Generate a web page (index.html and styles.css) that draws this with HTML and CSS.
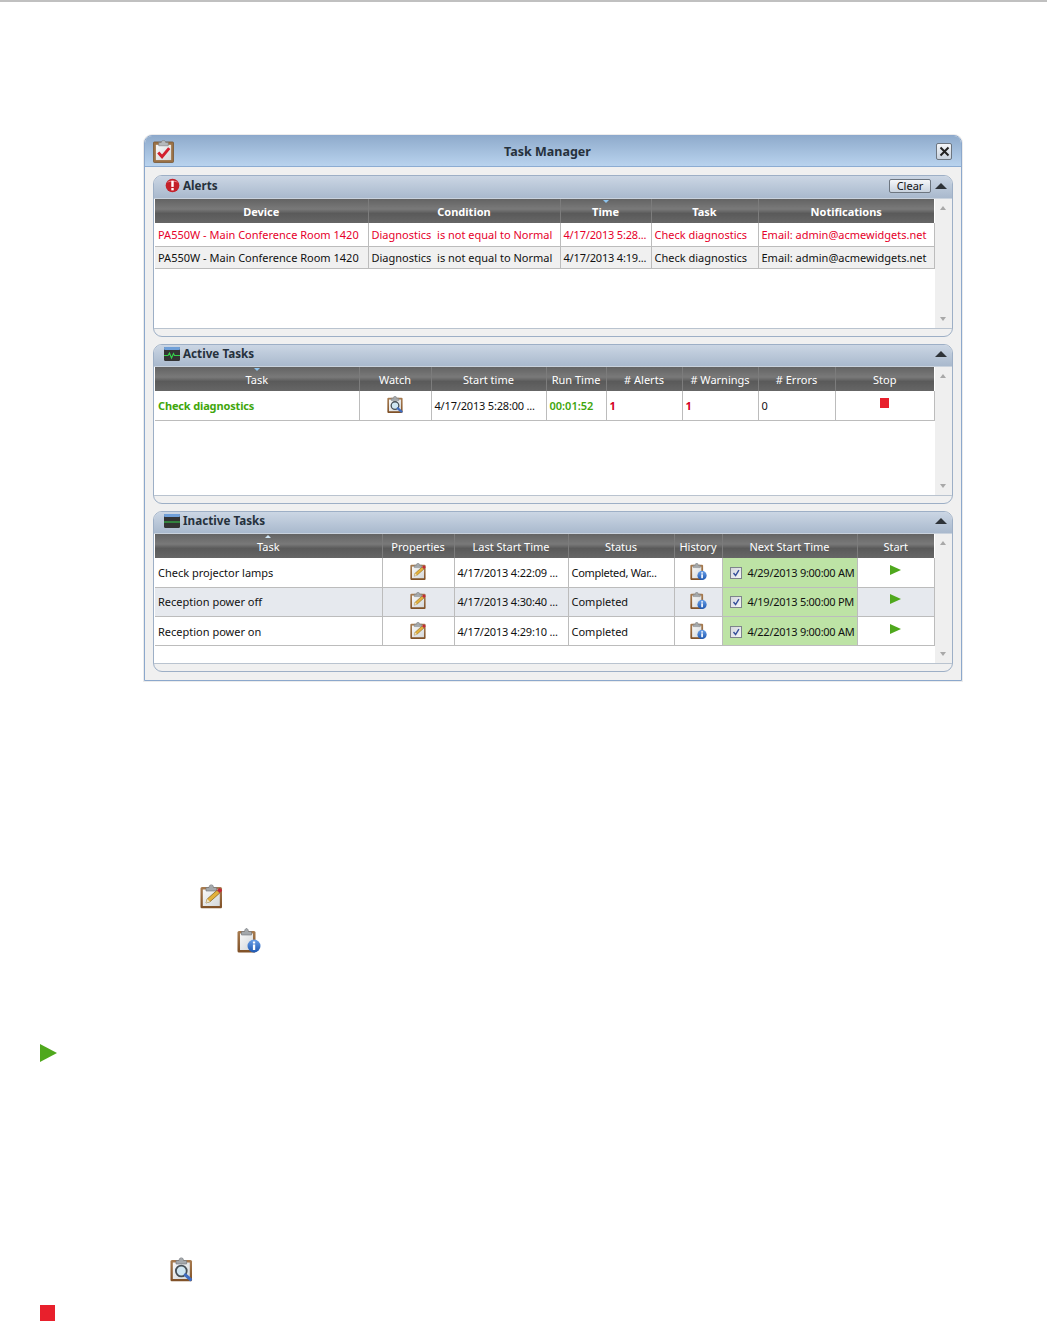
FILE: index.html
```html
<!DOCTYPE html>
<html lang="en">
<head>
<meta charset="utf-8">
<title>Task Manager</title>
<link rel="stylesheet" href="styles.css">
</head>
<body>
<svg class="defs" width="0" height="0" aria-hidden="true">
  <defs>
    <linearGradient id="paper" x1="0" y1="0" x2="1" y2="1"><stop offset="0" stop-color="#f8f8f8"/><stop offset="1" stop-color="#d4d8da"/></linearGradient>
    <linearGradient id="board" x1="0" y1="0" x2="0" y2="1"><stop offset="0" stop-color="#a87c50"/><stop offset="1" stop-color="#7f5026"/></linearGradient>
    <linearGradient id="info" x1="0" y1="0" x2="0" y2="1"><stop offset="0" stop-color="#6aa0e8"/><stop offset="1" stop-color="#1c56b0"/></linearGradient>
    <symbol id="clip" viewBox="0 0 24 24">
      <rect x=".5" y="2.500" width="21.500" height="21.500" rx="1.500" fill="url(#board)"/>
      <rect x="2.800" y="5" width="17" height="16.500" fill="url(#paper)"/>
      <path d="M6 6.500V3h3C9.300 1 10.200 0 11.300 0s2 1 2.300 3h3v3.500z" fill="#a4a8ab" stroke="#6f7478" stroke-width=".6"/>
    </symbol>
    <symbol id="i-edit" viewBox="0 0 24 24">
      <use href="#clip"/>
      <path d="M6 18.500l1.200-4L17 5.800l2.800 2.700-9.800 8.700z" fill="#e3b13c" stroke="#7c5c18" stroke-width=".7"/>
      <path d="M6 18.500l1.200-4 2.800 2.700z" fill="#efe3c4"/>
      <path d="M17 5.800l1.900-1.900a1.200 1.200 0 0 1 1.700 0l1.100 1.100a1.200 1.200 0 0 1 0 1.700l-1.900 1.800z" fill="#c22a36"/>
    </symbol>
    <symbol id="i-info" viewBox="0 0 24 24">
      <rect x=".5" y="2.500" width="18" height="21.500" rx="1.500" fill="url(#board)"/>
      <rect x="3" y="5" width="13" height="16.500" fill="url(#paper)"/>
      <path d="M4.500 6.500V3h3C7.800 1 8.500 0 9.500 0s1.700 1 2 3h3v3.500z" fill="#a4a8ab" stroke="#6f7478" stroke-width=".6"/>
      <circle cx="17" cy="17.500" r="6.500" fill="url(#info)"/>
      <rect x="15.900" y="16" width="2.300" height="5.500" fill="#fff"/>
      <rect x="15.900" y="13" width="2.300" height="2" fill="#fff"/>
    </symbol>
    <symbol id="i-watch" viewBox="0 0 24 24">
      <use href="#clip"/>
      <circle cx="11.300" cy="13.500" r="5.400" fill="#cfe6f2" stroke="#454f56" stroke-width="1.800"/>
      <path d="M15.300 17.400l5.200 4.600" stroke="#3f6cc0" stroke-width="3.200" stroke-linecap="round"/>
    </symbol>
  </defs>
</svg>
<div class="topline"></div>

<section class="window">
  <header class="titlebar">
    <svg class="title-icon" viewBox="0 0 22 24">
      <rect x=".5" y="2" width="21" height="21.500" rx="1" fill="#9c7246" stroke="#75532e" stroke-width=".8"/>
      <rect x="3" y="5" width="16" height="16" fill="url(#paper)"/>
      <path d="M6 6V2.600h2.600C8.900 1 9.900.4 11 .4s2.100.6 2.400 2.200H16V6z" fill="#b5b9bc" stroke="#75797c" stroke-width=".6"/>
      <path d="M5.500 13l4 4.500 7.500-9" fill="none" stroke="#d3202e" stroke-width="3"/>
    </svg>
    <h1 class="window-title">Task Manager</h1>
    <button class="close" type="button" aria-label="Close">
      <svg viewBox="0 0 11 11" width="11" height="11"><path d="M1.500 1.500l8 8M9.500 1.500l-8 8" stroke="#222" stroke-width="2"/></svg>
    </button>
  </header>

  <div class="panels">
    <section class="panel">
      <div class="panel-head head-tall">
        <svg class="panel-icon" viewBox="0 0 16 16"><circle cx="8" cy="8" r="7.300" fill="#c4212a"/><path d="M2 5a7 5 0 0 1 12 0c-3-1.500-9-1.500-12 0z" fill="#e98086"/><rect x="6.700" y="3" width="2.600" height="6.500" fill="#fff"/><rect x="6.700" y="10.700" width="2.600" height="2.500" fill="#fff"/></svg>
        <span class="panel-title">Alerts</span>
        <button class="clear" type="button">Clear</button>
        <span class="collapse"></span>
      </div>
      <div class="panel-body body-alerts">
        <div class="table-area">
          <table class="grid">
            <colgroup><col class="a1"><col class="a2"><col class="a3"><col class="a4"><col class="a5"></colgroup>
            <thead class="strong"><tr>
              <th>Device</th><th>Condition</th><th class="sorted">Time<span class="sort-down"></span></th><th>Task</th><th>Notifications</th>
            </tr></thead>
            <tbody class="alert-rows">
              <tr class="is-red"><td>PA550W - Main Conference Room 1420</td><td>Diagnostics&nbsp; is not equal to Normal</td><td class="date">4/17/2013 5:28...</td><td>Check diagnostics</td><td>Email: admin@acmewidgets.net</td></tr>
              <tr class="is-alt"><td>PA550W - Main Conference Room 1420</td><td>Diagnostics&nbsp; is not equal to Normal</td><td class="date">4/17/2013 4:19...</td><td>Check diagnostics</td><td>Email: admin@acmewidgets.net</td></tr>
            </tbody>
          </table>
        </div>
        <div class="scroll"><span class="up"></span><span class="down"></span></div>
      </div>
      <div class="panel-foot"></div>
    </section>

    <section class="panel">
      <div class="panel-head">
        <svg class="panel-icon wide" viewBox="0 0 16 14"><rect width="16" height="14" rx="1.500" fill="#333"/><rect width="16" height="3" rx="1" fill="#6f9fd8"/><path d="M0 8.500h4l1.500-2.500 2 5 2-4.500 1 2H16" fill="none" stroke="#35d04a" stroke-width="1.100"/></svg>
        <span class="panel-title">Active Tasks</span>
        <span class="collapse"></span>
      </div>
      <div class="panel-body body-active">
        <div class="table-area">
          <table class="grid">
            <colgroup><col class="b1"><col class="b2"><col class="b3"><col class="b4"><col class="b5"><col class="b6"><col class="b7"><col class="b8"></colgroup>
            <thead><tr>
              <th>Task<span class="sort-down"></span></th><th>Watch</th><th>Start time</th><th>Run Time</th><th># Alerts</th><th># Warnings</th><th># Errors</th><th>Stop</th>
            </tr></thead>
            <tbody class="task-rows">
              <tr>
                <td class="running">Check diagnostics</td>
                <td class="center"><svg class="cell-icon"><use href="#i-watch"/></svg></td>
                <td class="date">4/17/2013 5:28:00 ...</td>
                <td class="running-time">00:01:52</td>
                <td class="count-red">1</td>
                <td class="count-red">1</td>
                <td>0</td>
                <td class="center"><span class="stop-small"></span></td>
              </tr>
            </tbody>
          </table>
        </div>
        <div class="scroll"><span class="up"></span><span class="down"></span></div>
      </div>
      <div class="panel-foot"></div>
    </section>

    <section class="panel">
      <div class="panel-head">
        <svg class="panel-icon wide" viewBox="0 0 16 14"><rect width="16" height="14" rx="1.500" fill="#333"/><rect width="16" height="3" rx="1" fill="#6f9fd8"/><path d="M0 8h16" stroke="#35d04a" stroke-width="1.100"/></svg>
        <span class="panel-title">Inactive Tasks</span>
        <span class="collapse"></span>
      </div>
      <div class="panel-body body-inactive">
        <div class="table-area">
          <table class="grid">
            <colgroup><col class="c1"><col class="c2"><col class="c3"><col class="c4"><col class="c5"><col class="c6"><col class="c7"></colgroup>
            <thead><tr>
              <th>Task<span class="sort-up"></span></th><th>Properties</th><th>Last Start Time</th><th>Status</th><th>History</th><th>Next Start Time</th><th>Start</th>
            </tr></thead>
            <tbody class="task-rows">
              <tr>
                <td>Check projector lamps</td>
                <td class="center"><svg class="cell-icon"><use href="#i-edit"/></svg></td>
                <td class="date">4/17/2013 4:22:09 ...</td>
                <td class="tight">Completed, War...</td>
                <td class="center"><svg class="cell-icon"><use href="#i-info"/></svg></td>
                <td class="next"><span class="check"><svg viewBox="0 0 12 12"><path d="M3 6l2.500 3L9.500 2.500" fill="none" stroke="#36509a" stroke-width="1.700"/></svg></span>4/29/2013 9:00:00 AM</td>
                <td class="center"><span class="play-small"></span></td>
              </tr>
              <tr class="is-tint">
                <td>Reception power off</td>
                <td class="center"><svg class="cell-icon"><use href="#i-edit"/></svg></td>
                <td class="date">4/17/2013 4:30:40 ...</td>
                <td>Completed</td>
                <td class="center"><svg class="cell-icon"><use href="#i-info"/></svg></td>
                <td class="next"><span class="check"><svg viewBox="0 0 12 12"><path d="M3 6l2.500 3L9.500 2.500" fill="none" stroke="#36509a" stroke-width="1.700"/></svg></span>4/19/2013 5:00:00 PM</td>
                <td class="center"><span class="play-small"></span></td>
              </tr>
              <tr class="row-last">
                <td>Reception power on</td>
                <td class="center"><svg class="cell-icon"><use href="#i-edit"/></svg></td>
                <td class="date">4/17/2013 4:29:10 ...</td>
                <td>Completed</td>
                <td class="center"><svg class="cell-icon"><use href="#i-info"/></svg></td>
                <td class="next"><span class="check"><svg viewBox="0 0 12 12"><path d="M3 6l2.500 3L9.500 2.500" fill="none" stroke="#36509a" stroke-width="1.700"/></svg></span>4/22/2013 9:00:00 AM</td>
                <td class="center"><span class="play-small"></span></td>
              </tr>
            </tbody>
          </table>
        </div>
        <div class="scroll"><span class="up"></span><span class="down"></span></div>
      </div>
      <div class="panel-foot"></div>
    </section>
  </div>
</section>

<div class="legend">
  <svg class="legend-icon legend-edit"><use href="#i-edit"/></svg>
  <svg class="legend-icon legend-info"><use href="#i-info"/></svg>
  <span class="legend-play"></span>
  <svg class="legend-icon legend-watch"><use href="#i-watch"/></svg>
  <span class="legend-stop"></span>
</div>
</body>
</html>
```

FILE: styles.css
```css
* { box-sizing: border-box; }
html, body { margin: 0; padding: 0; background: #fff; }
body { font-family: "Noto Sans", "Open Sans", sans-serif; font-size: 11px; color: #111; }
.defs { display: block; height: 0; }
.topline { height: 2px; background: #c0c0c0; }

.window {
  width: 818px;
  margin: 133px 0 0 144px;
  border: 1px solid #8ca8cc;
  border-radius: 8px 8px 0 0;
  background: #f0f0f0;
  box-shadow: 0 0 0 1px #ececec;
}
.titlebar {
  height: 31px;
  display: flex;
  align-items: center;
  padding: 0 9px 0 8px;
  border-bottom: 1px solid #8cacd2;
  border-radius: 7px 7px 0 0;
  background: linear-gradient(#8fabcc, #b9d3ee);
}
.title-icon { width: 21px; height: 23px; flex: none; }
.window-title {
  flex: 1;
  margin: 0;
  padding: 2px 15px 0 0;
  font-size: 12.500px;
  font-weight: 700;
  line-height: 28px;
  text-align: center;
  color: #26313c;
}
.close {
  flex: none;
  width: 16px;
  height: 17px;
  padding: 0;
  display: flex;
  align-items: center;
  justify-content: center;
  border: 1px solid #6d7680;
  border-radius: 2px;
  background: linear-gradient(#f4f6f9, #c8d2de);
}

.panels { display: flex; flex-direction: column; gap: 7px; padding: 8px; }
.panel {
  border: 1px solid #9dafc6;
  border-radius: 9px;
  background: #f0f0f0;
  overflow: hidden;
}
.panel-head {
  height: 22px;
  display: flex;
  align-items: center;
  padding: 0 5px 4px 11px;
  border-bottom: 1px solid #c9d2dd;
  background: linear-gradient(#cbd6e4, #a9b9cd);
}
.head-tall { height: 23px; padding-bottom: 3px; }
.panel-icon { width: 15px; height: 15px; flex: none; margin-right: 3px; }
.panel-icon.wide { width: 16px; height: 14px; margin: 0 3px 0 -1px; }
.panel-title { flex: 1; margin-bottom: 1px; font-weight: 700; font-size: 11.700px; color: #26313c; }
.clear {
  width: 42px;
  height: 14px;
  margin-right: 4px;
  padding: 0;
  font: 11px/12px "Noto Sans", sans-serif;
  color: #111;
  border: 1px solid #6d7680;
  border-radius: 2px;
  background: linear-gradient(#f6f7f9, #c9d3df);
}
.collapse {
  width: 0;
  height: 0;
  border-left: 6px solid transparent;
  border-right: 6px solid transparent;
  border-bottom: 6px solid #2e3338;
}

.panel-body {
  display: flex;
  border-bottom: 1px solid #b9c3cf;
  padding-left: 1px;
  background: #fff;
}
.body-alerts { height: 130px; }
.body-active { height: 129px; }
.body-inactive { height: 130px; }
.panel-foot { height: 7px; }
.table-area { width: 779px; flex: none; }
.scroll {
  flex: 1;
  position: relative;
  margin-left: 1px;
  background: #efefef;
}
.scroll .up, .scroll .down {
  position: absolute;
  left: 5px;
  width: 0;
  height: 0;
  border-left: 3.500px solid transparent;
  border-right: 3.500px solid transparent;
}
.scroll .up { top: 7px; border-bottom: 4px solid #a8a8a8; }
.scroll .down { bottom: 7px; border-top: 4px solid #a8a8a8; }

.grid { width: 779px; table-layout: fixed; border-collapse: collapse; }
.grid th {
  position: relative;
  height: 24px;
  padding: 1px 0 0;
  font-size: 11px;
  font-weight: 400;
  color: #fff;
  white-space: nowrap;
  border-left: 1px solid #7c7c7c;
  background: linear-gradient(#636363 0, #797979 42%, #5a5a5a 60%, #666 100%);
}
.grid th:first-child { border-left: 0; }
.grid th:last-child { border-right: 0; }
.strong th { font-weight: 700; }
.grid td {
  padding: 0 0 0 3px;
  font-size: 11px;
  white-space: nowrap;
  overflow: hidden;
  border: 1px solid #bcbcbc;
  border-top: 0;
}
.grid td:first-child { border-left: 0; }
.alert-rows tr { height: 22px; }
.alert-rows tr:first-child { height: 23px; }
.task-rows tr { height: 29px; }
.row-last td { padding-top: 1px; }
.center { text-align: center; }
.grid .center { padding-left: 0; }
.is-red td { color: #e6002b; }
.is-alt td { background: #f0f0f0; }
.is-tint td { background: #e6e9ee; }
.grid .running { font-weight: 700; color: #3fa60c; letter-spacing: -.15px; }
.running-time { color: #3fa60c; font-weight: 600; }
.count-red { color: #d4001f; font-weight: 700; }
.grid .tight { letter-spacing: -.3px; }
.grid .date { letter-spacing: -.18px; }

.a1 { width: 213px; } .a2 { width: 192px; } .a3 { width: 91px; } .a4 { width: 107px; } .a5 { width: 176px; }
.b1 { width: 204px; } .b2 { width: 72px; } .b3 { width: 115px; } .b4 { width: 60px; } .b5 { width: 76px; } .b6 { width: 76px; } .b7 { width: 77px; } .b8 { width: 99px; }
.c1 { width: 227px; } .c2 { width: 72px; } .c3 { width: 114px; } .c4 { width: 106px; } .c5 { width: 48px; } .c6 { width: 135px; } .c7 { width: 77px; }

.sort-down, .sort-up { position: absolute; left: 50%; top: 1px; width: 0; height: 0; margin-left: -3px; border-left: 3px solid transparent; border-right: 3px solid transparent; }
.sort-down { border-top: 3px solid #8ec4ee; }
.sort-up { border-bottom: 3px solid #cfe6f6; }

.cell-icon { display: inline-block; width: 17px; height: 17px; vertical-align: middle; margin-bottom: 2px; }
.stop-small { display: inline-block; width: 9px; height: 10px; margin-bottom: 6px; vertical-align: middle; background: #e8202c; }
.play-small {
  display: inline-block;
  width: 0;
  height: 0;
  margin-bottom: 6px;
  vertical-align: middle;
  border-left: 11px solid #4fa81d;
  border-top: 5px solid transparent;
  border-bottom: 5px solid transparent;
}
.grid .next { background: #bde3a5; padding-left: 7px; letter-spacing: -.27px; }
.check {
  display: inline-block;
  width: 12px;
  height: 12px;
  margin-right: 6px;
  vertical-align: -2px;
  border: 1px solid #7e838c;
  background: linear-gradient(135deg, #d4d7dc, #f4f5f7);
}
.check svg { display: block; width: 10px; height: 10px; }

.legend { display: flex; flex-direction: column; align-items: flex-start; }
.legend-icon { display: block; width: 24px; height: 25px; }
.legend-edit { margin: 203px 0 0 200px; }
.legend-info { margin: 19px 0 0 237px; }
.legend-play {
  width: 0;
  height: 0;
  margin: 91px 0 0 40px;
  border-left: 17px solid #4fa81d;
  border-top: 9px solid transparent;
  border-bottom: 9px solid transparent;
}
.legend-watch { margin: 195px 0 0 170px; }
.legend-stop { width: 15px; height: 16px; margin: 23px 0 0 40px; background: #e8202c; }
```
